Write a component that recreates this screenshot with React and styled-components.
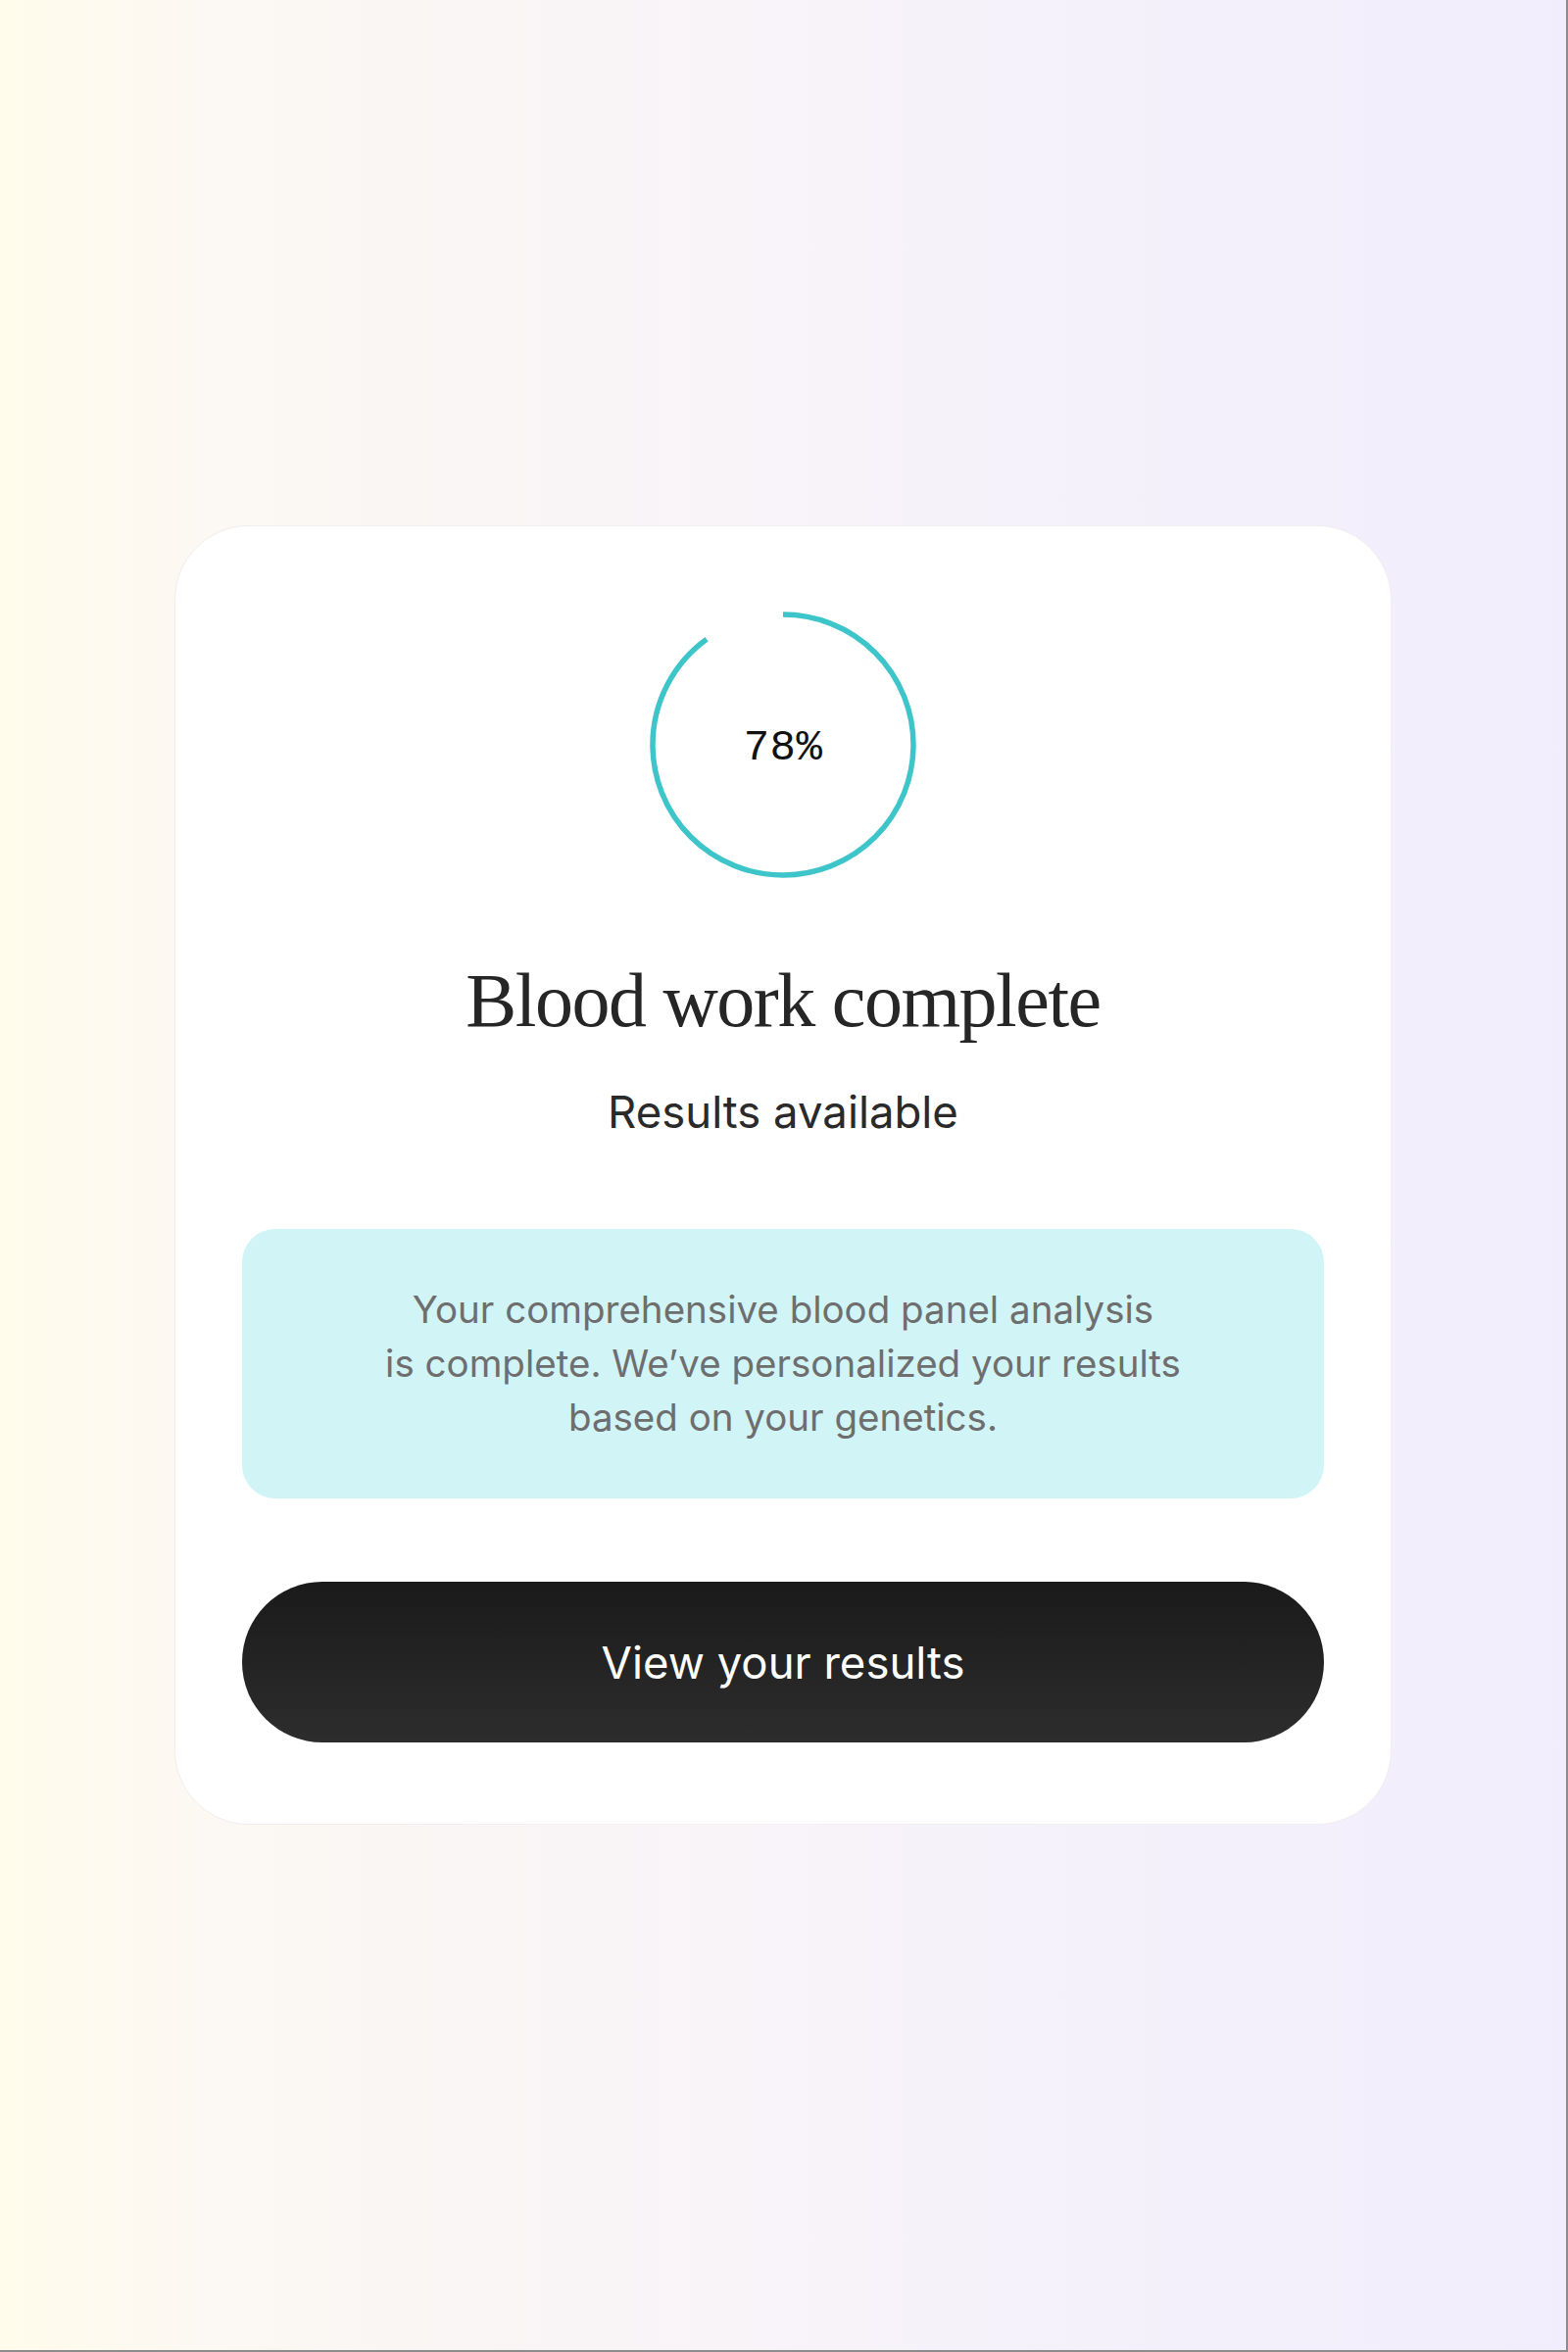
import React from "react"
import styled, { createGlobalStyle } from "styled-components"

const GlobalStyle = createGlobalStyle`
  html, body {
    margin: 0;
    padding: 0;
  }
  body {
    font-family: Inter, "Noto Sans", sans-serif;
    -webkit-font-smoothing: antialiased;
  }
`

const Page = styled.div`
  box-sizing: border-box;
  width: 1600px;
  min-height: 2400px;
  display: flex;
  align-items: center;
  justify-content: center;
  background: linear-gradient(
    90deg,
    #fffcec 0%,
    #fcf8f2 12%,
    #f9f5f6 35%,
    #f7f3f9 55%,
    #f4f0fb 75%,
    #f1edfc 100%
  );
  border-right: 2px solid #8c8c8c;
  border-bottom: 2px solid #8c8c8c;
`

const Card = styled.section`
  box-sizing: border-box;
  width: 1242px;
  padding: 86px 68px 83px;
  background: #ffffff;
  border: 1.5px solid #f0eeee;
  border-radius: 76px;
  display: flex;
  flex-direction: column;
  align-items: center;
`

const Ring = styled.div`
  position: relative;
  width: 274px;
  height: 274px;
  display: grid;
  place-items: center;

  svg {
    position: absolute;
    inset: 0;
  }
`

const Percent = styled.span`
  font-family: "Liberation Mono", "DejaVu Sans Mono", monospace;
  font-size: 44px;
  color: #111;
  letter-spacing: 0.5px;
  position: relative;
  top: 3px;
`

const Title = styled.h1`
  margin: 77px 0 0;
  font-family: "Liberation Serif", "DejaVu Serif", serif;
  font-weight: 400;
  font-size: 78px;
  line-height: 1.2;
  letter-spacing: -1.5px;
  color: #262626;
`

const Subtitle = styled.p`
  margin: 38px 0 0;
  font-size: 45.5px;
  line-height: 1.3;
  color: #2a2a2a;
`

const Notice = styled.div`
  box-sizing: border-box;
  width: 100%;
  margin-top: 90px;
  padding: 34px 40px;
  min-height: 275px;
  display: flex;
  align-items: center;
  justify-content: center;
  background: #d1f4f7;
  border-radius: 34px;
`

const NoticeText = styled.p`
  margin: 0;
  font-size: 38.5px;
  line-height: 55px;
  text-align: center;
  color: #6e6e6e;
`

const Button = styled.button`
  box-sizing: border-box;
  width: 100%;
  height: 164px;
  margin-top: 85px;
  border: none;
  border-radius: 82px;
  background: linear-gradient(180deg, #1a1a1a 0%, #2d2d2d 100%);
  color: #ffffff;
  font-family: Inter, "Noto Sans", sans-serif;
  font-size: 45.5px;
  cursor: pointer;
`

const SIZE = 274
const R = 133
const C = 2 * Math.PI * R

const ProgressRing = ({ value, shown }) => (
  <Ring>
    <svg width={SIZE} height={SIZE} viewBox={`0 0 ${SIZE} ${SIZE}`}>
      <circle
        cx={SIZE / 2}
        cy={SIZE / 2}
        r={R}
        fill="none"
        stroke="#3ec5ca"
        strokeWidth="5.5"
        strokeDasharray={`${C * shown} ${C}`}
        transform={`rotate(-90 ${SIZE / 2} ${SIZE / 2})`}
      />
    </svg>
    <Percent>{value}%</Percent>
  </Ring>
)

export default function App() {
  return (
    <>
      <GlobalStyle />
      <Page>
        <Card>
          <ProgressRing value={78} shown={0.9} />
          <Title>Blood work complete</Title>
          <Subtitle>Results available</Subtitle>
          <Notice>
            <NoticeText>
              Your comprehensive blood panel analysis
              <br />
              is complete. We’ve personalized your results
              <br />
              based on your genetics.
            </NoticeText>
          </Notice>
          <Button>View your results</Button>
        </Card>
      </Page>
    </>
  )
}
